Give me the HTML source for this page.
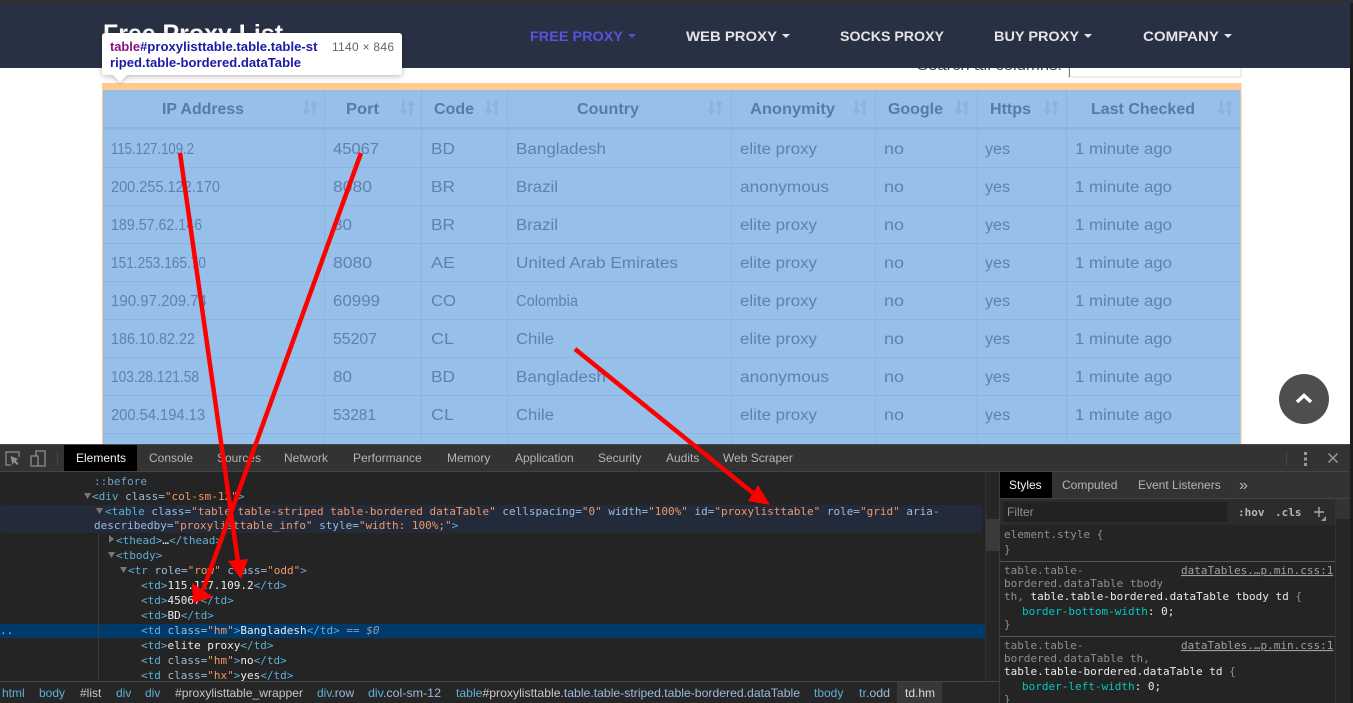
<!DOCTYPE html>
<html><head><meta charset="utf-8"><title>Free Proxy List</title>
<style>
html,body{margin:0;padding:0;background:#fff;width:1353px;height:703px;overflow:hidden}
svg{display:block}
text{white-space:pre}
.s{font-family:"Liberation Sans",sans-serif}
.h{font:bold 15.5px "Liberation Sans",sans-serif;fill:#557ca8}
.d{font:15.5px "Liberation Sans",sans-serif;fill:#5f81ab}
.n{font:bold 13.5px "Liberation Sans",sans-serif;fill:#e4e4e6}
.t{font:12px "Liberation Sans",sans-serif;fill:#b5b5b5}
.b{font:12px "Liberation Sans",sans-serif;fill:#5db0d7}
.m{font:11px "DejaVu Sans Mono",monospace;fill:#9bbbdc}
.g{fill:#5db0d7}.o{fill:#f29766}.w{fill:#eaeaea}.a{fill:#9bbbdc}
.q{font:11px "DejaVu Sans Mono",monospace;fill:#8f8f8f}
.e{fill:#eaeaea}.c{fill:#00c8c0}
</style></head><body>
<svg width="1353" height="703" viewBox="0 0 1353 703" xmlns="http://www.w3.org/2000/svg">
<defs>
<g id="so"><path d="M3 0h3v10h3l-4.500 5-4.500-5h3z" fill="#8ab4e0"/><path d="M11.500 15h3V5h3L13 0 8.500 5h3z" fill="#8ab4e0" transform="translate(-1 0)"/></g>
<filter id="sh" x="-10%" y="-30%" width="120%" height="170%"><feDropShadow dx="0" dy="1" stdDeviation="3" flood-color="#000" flood-opacity=".3"/></filter>
</defs>
<rect width="1353" height="703" fill="#fff"/>
<rect x="1350" width="3" height="703" fill="#1d1d1d"/>
<!-- search -->
<text x="917" y="70" class="s" font-size="14.500" fill="#444" textLength="145" lengthAdjust="spacingAndGlyphs">Search all columns:</text>
<rect x="1069" y="60" width="172" height="17" fill="#fff" stroke="#eee" stroke-width="2"/>
<rect x="1069" y="60" width="1" height="17" fill="#777"/>
<!-- nav -->
<rect width="1350" height="68" fill="#283044"/>
<rect width="1353" height="3" fill="#303030"/>
<text x="103" y="42" class="s" font-size="25" font-weight="bold" fill="#fff" textLength="180" lengthAdjust="spacingAndGlyphs">Free Proxy List</text>
<text x="530" y="41" class="n" style="fill:#5555dc" textLength="93" lengthAdjust="spacingAndGlyphs">FREE PROXY</text><path d="M628 34h8l-4 4z" fill="#5555dc"/>
<text x="686" y="41" class="n" textLength="91" lengthAdjust="spacingAndGlyphs">WEB PROXY</text><path d="M782 34h8l-4 4z" fill="#e4e4e6"/>
<text x="840" y="41" class="n" textLength="104" lengthAdjust="spacingAndGlyphs">SOCKS PROXY</text>
<text x="994" y="41" class="n" textLength="85" lengthAdjust="spacingAndGlyphs">BUY PROXY</text><path d="M1084 34h8l-4 4z" fill="#e4e4e6"/>
<text x="1143" y="41" class="n" textLength="76" lengthAdjust="spacingAndGlyphs">COMPANY</text><path d="M1224 34h8l-4 4z" fill="#e4e4e6"/>
<!-- table -->
<rect x="102" y="83" width="1139.500" height="361" fill="#fdca8f"/>
<rect x="103" y="90" width="1137.500" height="354" fill="#96bfea"/>
<rect x="103" y="127" width="1137.500" height="3" fill="#8bb5e1"/>
<g fill="#8bb5e1">
<rect x="103" y="167" width="1137.500" height="1"/><rect x="103" y="205" width="1137.500" height="1"/><rect x="103" y="243" width="1137.500" height="1"/><rect x="103" y="281" width="1137.500" height="1"/><rect x="103" y="319" width="1137.500" height="1"/><rect x="103" y="357" width="1137.500" height="1"/><rect x="103" y="395" width="1137.500" height="1"/><rect x="103" y="433" width="1137.500" height="1"/>
<rect x="324" y="90" width="1" height="354"/><rect x="421" y="90" width="1" height="354"/><rect x="507" y="90" width="1" height="354"/><rect x="731" y="90" width="1" height="354"/><rect x="875" y="90" width="1" height="354"/><rect x="977" y="90" width="1" height="354"/><rect x="1066" y="90" width="1" height="354"/>
</g>
<text x="162" y="114" class="h" lengthAdjust="spacingAndGlyphs" textLength="82">IP Address</text>
<text x="346" y="114" class="h" lengthAdjust="spacingAndGlyphs" textLength="33">Port</text>
<text x="434" y="114" class="h" lengthAdjust="spacingAndGlyphs" textLength="40">Code</text>
<text x="577" y="114" class="h" lengthAdjust="spacingAndGlyphs" textLength="62">Country</text>
<text x="750" y="114" class="h" lengthAdjust="spacingAndGlyphs" textLength="85">Anonymity</text>
<text x="888" y="114" class="h" lengthAdjust="spacingAndGlyphs" textLength="55">Google</text>
<text x="990" y="114" class="h" lengthAdjust="spacingAndGlyphs" textLength="41">Https</text>
<text x="1091" y="114" class="h" lengthAdjust="spacingAndGlyphs" textLength="104">Last Checked</text>
<use href="#so" x="302" y="100"/><use href="#so" x="399" y="100"/><use href="#so" x="484" y="100"/><use href="#so" x="707" y="100"/><use href="#so" x="852" y="100"/><use href="#so" x="954" y="100"/><use href="#so" x="1043" y="100"/><use href="#so" x="1217" y="100"/>

<g class="d">
<text class="d" lengthAdjust="spacingAndGlyphs" x="111" y="154" textLength="83">115.127.109.2</text><text class="d" lengthAdjust="spacingAndGlyphs" x="333" y="154" textLength="46">45067</text><text class="d" lengthAdjust="spacingAndGlyphs" x="431" y="154" textLength="24">BD</text><text class="d" lengthAdjust="spacingAndGlyphs" x="516" y="154" textLength="90">Bangladesh</text><text class="d" lengthAdjust="spacingAndGlyphs" x="740" y="154" textLength="77">elite proxy</text><text class="d" lengthAdjust="spacingAndGlyphs" x="884" y="154" textLength="20">no</text><text class="d" lengthAdjust="spacingAndGlyphs" x="985" y="154" textLength="25">yes</text><text class="d" lengthAdjust="spacingAndGlyphs" x="1075" y="154" textLength="97">1 minute ago</text>
<text class="d" lengthAdjust="spacingAndGlyphs" x="111" y="192" textLength="109">200.255.122.170</text><text class="d" lengthAdjust="spacingAndGlyphs" x="333" y="192" textLength="39">8080</text><text class="d" lengthAdjust="spacingAndGlyphs" x="431" y="192" textLength="24">BR</text><text class="d" lengthAdjust="spacingAndGlyphs" x="516" y="192" textLength="42">Brazil</text><text class="d" lengthAdjust="spacingAndGlyphs" x="740" y="192" textLength="89">anonymous</text><text class="d" lengthAdjust="spacingAndGlyphs" x="884" y="192" textLength="20">no</text><text class="d" lengthAdjust="spacingAndGlyphs" x="985" y="192" textLength="25">yes</text><text class="d" lengthAdjust="spacingAndGlyphs" x="1075" y="192" textLength="97">1 minute ago</text>
<text class="d" lengthAdjust="spacingAndGlyphs" x="111" y="230" textLength="91">189.57.62.146</text><text class="d" lengthAdjust="spacingAndGlyphs" x="333" y="230" textLength="19">80</text><text class="d" lengthAdjust="spacingAndGlyphs" x="431" y="230" textLength="24">BR</text><text class="d" lengthAdjust="spacingAndGlyphs" x="516" y="230" textLength="42">Brazil</text><text class="d" lengthAdjust="spacingAndGlyphs" x="740" y="230" textLength="77">elite proxy</text><text class="d" lengthAdjust="spacingAndGlyphs" x="884" y="230" textLength="20">no</text><text class="d" lengthAdjust="spacingAndGlyphs" x="985" y="230" textLength="25">yes</text><text class="d" lengthAdjust="spacingAndGlyphs" x="1075" y="230" textLength="97">1 minute ago</text>
<text class="d" lengthAdjust="spacingAndGlyphs" x="111" y="268" textLength="95">151.253.165.70</text><text class="d" lengthAdjust="spacingAndGlyphs" x="333" y="268" textLength="39">8080</text><text class="d" lengthAdjust="spacingAndGlyphs" x="431" y="268" textLength="24">AE</text><text class="d" lengthAdjust="spacingAndGlyphs" x="516" y="268" textLength="162">United Arab Emirates</text><text class="d" lengthAdjust="spacingAndGlyphs" x="740" y="268" textLength="77">elite proxy</text><text class="d" lengthAdjust="spacingAndGlyphs" x="884" y="268" textLength="20">no</text><text class="d" lengthAdjust="spacingAndGlyphs" x="985" y="268" textLength="25">yes</text><text class="d" lengthAdjust="spacingAndGlyphs" x="1075" y="268" textLength="97">1 minute ago</text>
<text class="d" lengthAdjust="spacingAndGlyphs" x="111" y="306" textLength="96">190.97.209.74</text><text class="d" lengthAdjust="spacingAndGlyphs" x="333" y="306" textLength="47">60999</text><text class="d" lengthAdjust="spacingAndGlyphs" x="431" y="306" textLength="25">CO</text><text class="d" lengthAdjust="spacingAndGlyphs" x="516" y="306" textLength="62">Colombia</text><text class="d" lengthAdjust="spacingAndGlyphs" x="740" y="306" textLength="77">elite proxy</text><text class="d" lengthAdjust="spacingAndGlyphs" x="884" y="306" textLength="20">no</text><text class="d" lengthAdjust="spacingAndGlyphs" x="985" y="306" textLength="25">yes</text><text class="d" lengthAdjust="spacingAndGlyphs" x="1075" y="306" textLength="97">1 minute ago</text>
<text class="d" lengthAdjust="spacingAndGlyphs" x="111" y="344" textLength="84">186.10.82.22</text><text class="d" lengthAdjust="spacingAndGlyphs" x="333" y="344" textLength="44">55207</text><text class="d" lengthAdjust="spacingAndGlyphs" x="431" y="344" textLength="23">CL</text><text class="d" lengthAdjust="spacingAndGlyphs" x="516" y="344" textLength="38">Chile</text><text class="d" lengthAdjust="spacingAndGlyphs" x="740" y="344" textLength="77">elite proxy</text><text class="d" lengthAdjust="spacingAndGlyphs" x="884" y="344" textLength="20">no</text><text class="d" lengthAdjust="spacingAndGlyphs" x="985" y="344" textLength="25">yes</text><text class="d" lengthAdjust="spacingAndGlyphs" x="1075" y="344" textLength="97">1 minute ago</text>
<text class="d" lengthAdjust="spacingAndGlyphs" x="111" y="382" textLength="88">103.28.121.58</text><text class="d" lengthAdjust="spacingAndGlyphs" x="333" y="382" textLength="19">80</text><text class="d" lengthAdjust="spacingAndGlyphs" x="431" y="382" textLength="24">BD</text><text class="d" lengthAdjust="spacingAndGlyphs" x="516" y="382" textLength="90">Bangladesh</text><text class="d" lengthAdjust="spacingAndGlyphs" x="740" y="382" textLength="89">anonymous</text><text class="d" lengthAdjust="spacingAndGlyphs" x="884" y="382" textLength="20">no</text><text class="d" lengthAdjust="spacingAndGlyphs" x="985" y="382" textLength="25">yes</text><text class="d" lengthAdjust="spacingAndGlyphs" x="1075" y="382" textLength="97">1 minute ago</text>
<text class="d" lengthAdjust="spacingAndGlyphs" x="111" y="420" textLength="94">200.54.194.13</text><text class="d" lengthAdjust="spacingAndGlyphs" x="333" y="420" textLength="43">53281</text><text class="d" lengthAdjust="spacingAndGlyphs" x="431" y="420" textLength="23">CL</text><text class="d" lengthAdjust="spacingAndGlyphs" x="516" y="420" textLength="38">Chile</text><text class="d" lengthAdjust="spacingAndGlyphs" x="740" y="420" textLength="77">elite proxy</text><text class="d" lengthAdjust="spacingAndGlyphs" x="884" y="420" textLength="20">no</text><text class="d" lengthAdjust="spacingAndGlyphs" x="985" y="420" textLength="25">yes</text><text class="d" lengthAdjust="spacingAndGlyphs" x="1075" y="420" textLength="97">1 minute ago</text>
</g>
<!-- tooltip -->
<path d="M105 33h294a3 3 0 0 1 3 3v36a3 3 0 0 1-3 3H127l-7 7-7-7h-8a3 3 0 0 1-3-3V36a3 3 0 0 1 3-3z" fill="#fff" filter="url(#sh)"/>
<text x="110" y="51" class="s" font-size="12.500" font-weight="bold" fill="#881280" textLength="30" lengthAdjust="spacingAndGlyphs">table</text>
<text x="140" y="51" class="s" font-size="12.500" font-weight="bold" fill="#1a1aa6" textLength="177.500" lengthAdjust="spacingAndGlyphs">#proxylisttable.table.table-st</text>
<text x="110" y="67" class="s" font-size="12.500" font-weight="bold" fill="#1a1aa6" textLength="191" lengthAdjust="spacingAndGlyphs">riped.table-bordered.dataTable</text>
<text x="332" y="51" class="s" font-size="12" fill="#666" textLength="62">1140 × 846</text>
<!-- back to top -->
<circle cx="1304" cy="399" r="25" fill="#4f4f4f"/>
<path d="M1297 402l7-6.500 7 6.500" fill="none" stroke="#fff" stroke-width="3.500"/>
<!-- devtools -->
<rect y="444" width="1350" height="259" fill="#242424"/>
<rect y="444" width="1350" height="1" fill="#4a4a4a"/>
<rect y="445" width="1350" height="26" fill="#333"/>
<rect y="471" width="1350" height="1" fill="#444"/>
<rect x="64" y="445" width="73" height="26" fill="#000"/>
<path d="M11 465H6v-13h13v5" fill="none" stroke="#8f8f8f" stroke-width="1.200"/><path d="M10.500 456l8 3-3 1.500 3 3-1.500 1.500-3-3-1.500 3z" fill="#8f8f8f"/>
<path d="M36 456v-5h9v15h-9M31 456h7v10h-7z" fill="none" stroke="#8f8f8f" stroke-width="1.300"/>
<rect x="57" y="451" width="1" height="15" fill="#444"/>
<text x="76" y="462" class="t" style="fill:#f2f2f2">Elements</text>
<text x="149" y="462" class="t">Console</text><text x="217" y="462" class="t">Sources</text><text x="284" y="462" class="t">Network</text><text x="353" y="462" class="t">Performance</text><text x="447" y="462" class="t">Memory</text><text x="515" y="462" class="t">Application</text><text x="598" y="462" class="t">Security</text><text x="666" y="462" class="t">Audits</text><text x="723" y="462" class="t">Web Scraper</text>
<rect x="1286" y="451" width="1" height="15" fill="#444"/>
<g fill="#999"><rect x="1304" y="452" width="3" height="3"/><rect x="1304" y="457.500" width="3" height="3"/><rect x="1304" y="463" width="3" height="3"/></g>
<path d="M1328.500 453.500l9 9m0-9l-9 9" stroke="#999" stroke-width="1.500"/>

<!-- elements panel -->
<rect x="0" y="505" width="982" height="28" rx="3" fill="#232b3b"/>
<rect y="624" width="985" height="14" fill="#003a6b"/>
<rect x="98" y="533" width="1" height="148" fill="#3a3a3a"/>
<rect x="985" y="472" width="14" height="209" fill="#262626"/><rect x="985" y="472" width="1" height="209" fill="#333"/>
<rect x="986" y="519" width="13" height="32" fill="#3a3a3a"/>
<g fill="#777">
<path d="M84 493h7l-3.500 6zM96 508h7l-3.500 6zM120 567h7l-3.500 6zM108 552h7l-3.500 6zM109 535v8l5-4z"/>
</g>
<text x="94" y="485" class="m" style="fill:#6a9fc9">::before</text>
<text x="92" y="500" class="m"><tspan class="g">&lt;div</tspan> class=<tspan class="o">"col-sm-12"</tspan><tspan class="g">&gt;</tspan></text>
<text x="105" y="515" class="m"><tspan class="g">&lt;table</tspan> class=<tspan class="o">"table table-striped table-bordered dataTable"</tspan> cellspacing=<tspan class="o">"0"</tspan> width=<tspan class="o">"100%"</tspan> id=<tspan class="o">"proxylisttable"</tspan> role=<tspan class="o">"grid"</tspan> aria-</text>
<text x="94" y="529" class="m">describedby=<tspan class="o">"proxylisttable_info"</tspan> style=<tspan class="o">"width: 100%;"</tspan><tspan class="g">&gt;</tspan></text>
<text x="116" y="544" class="m"><tspan class="g">&lt;thead&gt;</tspan><tspan class="w">…</tspan><tspan class="g">&lt;/thead&gt;</tspan></text>
<text x="116" y="559" class="m"><tspan class="g">&lt;tbody&gt;</tspan></text>
<text x="128" y="574" class="m"><tspan class="g">&lt;tr</tspan> role=<tspan class="o">"row"</tspan> class=<tspan class="o">"odd"</tspan><tspan class="g">&gt;</tspan></text>
<text x="141" y="589" class="m"><tspan class="g">&lt;td&gt;</tspan><tspan class="w">115.127.109.2</tspan><tspan class="g">&lt;/td&gt;</tspan></text>
<text x="141" y="604" class="m"><tspan class="g">&lt;td&gt;</tspan><tspan class="w">45067</tspan><tspan class="g">&lt;/td&gt;</tspan></text>
<text x="141" y="619" class="m"><tspan class="g">&lt;td&gt;</tspan><tspan class="w">BD</tspan><tspan class="g">&lt;/td&gt;</tspan></text>
<text x="141" y="634" class="m"><tspan class="g">&lt;td</tspan> class=<tspan class="o">"hm"</tspan><tspan class="g">&gt;</tspan><tspan class="w">Bangladesh</tspan><tspan class="g">&lt;/td&gt;</tspan><tspan fill="#8a9db3"> == <tspan font-style="italic">$0</tspan></tspan></text>
<text x="0" y="634" class="m" style="fill:#9bbbdc">..</text>
<text x="141" y="649" class="m"><tspan class="g">&lt;td&gt;</tspan><tspan class="w">elite proxy</tspan><tspan class="g">&lt;/td&gt;</tspan></text>
<text x="141" y="664" class="m"><tspan class="g">&lt;td</tspan> class=<tspan class="o">"hm"</tspan><tspan class="g">&gt;</tspan><tspan class="w">no</tspan><tspan class="g">&lt;/td&gt;</tspan></text>
<text x="141" y="679" class="m"><tspan class="g">&lt;td</tspan> class=<tspan class="o">"hx"</tspan><tspan class="g">&gt;</tspan><tspan class="w">yes</tspan><tspan class="g">&lt;/td&gt;</tspan></text>
<!-- breadcrumb -->
<rect y="681" width="999" height="22" fill="#262626"/><rect y="681" width="999" height="1" fill="#444"/>
<rect x="897" y="682" width="45" height="21" fill="#383838"/>
<text x="2" y="697" class="b">html</text><text x="39" y="697" class="b">body</text><text x="80" y="697" class="b" style="fill:#c8c8c8">#list</text><text x="116" y="697" class="b">div</text><text x="145" y="697" class="b">div</text><text x="175" y="697" class="b" style="fill:#c8c8c8" textLength="128" lengthAdjust="spacingAndGlyphs">#proxylisttable_wrapper</text><text x="317" y="697" class="b">div<tspan fill="#9bbbdc">.row</tspan></text><text x="368" y="697" class="b" textLength="73" lengthAdjust="spacingAndGlyphs">div<tspan fill="#9bbbdc">.col-sm-12</tspan></text><text x="456" y="697" class="b" textLength="344" lengthAdjust="spacingAndGlyphs">table<tspan fill="#c8c8c8">#proxylisttable</tspan><tspan fill="#9bbbdc">.table.table-striped.table-bordered.dataTable</tspan></text><text x="814" y="697" class="b">tbody</text><text x="859" y="697" class="b" textLength="31" lengthAdjust="spacingAndGlyphs">tr<tspan fill="#9bbbdc">.odd</tspan></text><text x="905" y="697" class="b" style="fill:#dcdcdc">td.hm</text>
<!-- styles panel -->
<rect x="999" y="472" width="351" height="231" fill="#242424"/>
<rect x="999" y="472" width="1" height="231" fill="#3d3d3d"/>
<rect x="1000" y="472" width="350" height="26" fill="#333"/>
<rect x="1000" y="472" width="52" height="26" fill="#000"/>
<rect x="1000" y="498" width="350" height="1" fill="#444"/>
<text x="1009" y="489" class="t" style="fill:#f2f2f2">Styles</text><text x="1062" y="489" class="t">Computed</text><text x="1138" y="489" class="t">Event Listeners</text><text x="1239" y="490" class="t" style="font-size:16px">»</text>
<rect x="1000" y="499" width="335" height="26" fill="#2c2c2c"/>
<rect x="1003" y="502" width="224" height="20" fill="#222"/>
<text x="1007" y="516" class="t" style="fill:#8f8f8f">Filter</text>
<text x="1238" y="516" class="m" style="font-weight:bold;fill:#b5b5b5">:hov</text>
<text x="1275" y="516" class="m" style="font-weight:bold;fill:#b5b5b5">.cls</text>
<path d="M1319 507v10M1314 512h10" stroke="#aaa" stroke-width="1.400"/><path d="M1326 516v5h-5z" fill="#999"/>
<rect x="1335" y="472" width="1" height="231" fill="#333"/>
<rect x="1336" y="499" width="14" height="204" fill="#262626"/><rect x="1336" y="499" width="14" height="20" fill="#333"/>
<text x="1004" y="538" class="q">element.style {</text><text x="1004" y="553" class="q">}</text>
<rect x="1000" y="561" width="335" height="1" fill="#555"/>
<text x="1004" y="574" class="q">table.table-</text><text x="1181" y="574" class="q" text-decoration="underline" style="fill:#a0a0a0">dataTables.…p.min.css:1</text>
<text x="1004" y="587" class="q">bordered.dataTable tbody</text>
<text x="1004" y="600" class="q">th, <tspan class="e">table.table-bordered.dataTable tbody td</tspan> {</text>
<text x="1022" y="615" class="q"><tspan class="c">border-bottom-width</tspan><tspan class="e">: 0;</tspan></text>
<text x="1004" y="628" class="q">}</text>
<rect x="1000" y="636" width="335" height="1" fill="#555"/>
<text x="1004" y="649" class="q">table.table-</text><text x="1181" y="649" class="q" text-decoration="underline" style="fill:#a0a0a0">dataTables.…p.min.css:1</text>
<text x="1004" y="662" class="q">bordered.dataTable th,</text>
<text x="1004" y="675" class="q"><tspan class="e">table.table-bordered.dataTable td</tspan> {</text>
<text x="1022" y="690" class="q"><tspan class="c">border-left-width</tspan><tspan class="e">: 0;</tspan></text>
<text x="1004" y="703" class="q">}</text>
<!-- arrows -->
<g fill="#fe0000" stroke="none">
<path d="M180 153L238 562" stroke="#fe0000" stroke-width="4.500"/>
<path d="M228 561L248 559L241 579z"/>
<path d="M361 153L203 590" stroke="#fe0000" stroke-width="4.500"/>
<path d="M192 583L213 597L193 603z"/>
<path d="M575 349L753 493" stroke="#fe0000" stroke-width="4.500"/>
<path d="M758 485L748 501L770 505z"/>
</g>
</svg>
</body></html>
